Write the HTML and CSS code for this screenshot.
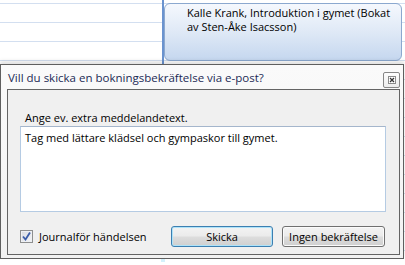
FILE: index.html
```html
<!DOCTYPE html>
<html lang="sv">
<head>
    <meta charset="UTF-8">
    <title>Bokningsbekräftelse</title>
    <link rel="stylesheet" href="styles.css">
</head>
<body>
    <div class="calendar">
        <div class="day-line"></div>
        <div class="booking">Kalle Krank, Introduktion i gymet (Bokat av Sten-Åke Isacsson)</div>
    </div>

    <div class="dialog">
        <div class="titlebar">
            <span class="caption">Vill du skicka en bokningsbekräftelse via e-post?</span>
            <span class="close-btn">
                <svg width="8" height="8" viewBox="0 0 8 8">
                    <rect x="0.5" y="0.5" width="7" height="7" fill="#fff" stroke="#8a8a8a"/>
                    <path d="M2 2 L6 6 M6 2 L2 6" stroke="#333" stroke-width="1.3"/>
                </svg>
            </span>
        </div>
        <div class="panel">
            <label class="msg-label" for="msg">Ange ev. extra meddelandetext.</label>
            <div class="msg-box" id="msg">Tag med lättare klädsel och gympaskor till gymet.</div>
            <div class="actions">
                <label class="check">
                    <span class="check-box">
                        <svg width="9" height="9" viewBox="0 0 9 9">
                            <path d="M1 4.5 L3.5 7.5 L8 0.5" fill="none" stroke="#3a5ca8" stroke-width="1.8"/>
                        </svg>
                    </span>
                    Journalför händelsen
                </label>
                <span class="btn btn-default">Skicka</span>
                <span class="btn">Ingen bekräftelse</span>
            </div>
        </div>
    </div>
    <div class="line-glow"></div>
</body>
</html>
```

FILE: styles.css
```css
body {
    margin: 0;
    width: 405px;
    height: 265px;
    overflow: hidden;
    font-family: 'Open Sans', sans-serif;
    font-size: 11px;
    color: #000;
    background-color: #fff;
    background-image: repeating-linear-gradient(to bottom, transparent 0, transparent 3px, #d3dff0 3px, #d3dff0 4px, transparent 4px, transparent 19px);
    position: relative;
}
.calendar {
    height: 60px;
    position: relative;
}
.day-line {
    position: absolute;
    left: 162px;
    top: 0;
    width: 2px;
    height: 66px;
    background: #6a93cf;
}
.line-glow {
    position: absolute;
    left: 161px;
    top: 259px;
    width: 4px;
    height: 3px;
    background: #d4f1fb;
}
.booking {
    position: absolute;
    left: 164px;
    top: 3px;
    width: 238px;
    height: 58px;
    box-sizing: border-box;
    padding: 2px 4px 0 22px;
    border: 1px solid #8ba8cf;
    border-radius: 6px;
    background: linear-gradient(to bottom, #f5f8fd, #dfe9f6 50%, #c5d7ef);
    line-height: 14px;
    color: #000;
}
.dialog {
    position: absolute;
    left: 0;
    top: 64px;
    width: 404px;
    height: 195px;
    box-sizing: border-box;
    border: 1px solid #5f5f5f;
    background: linear-gradient(to bottom, #fafafa, #f2f2f2);
    padding: 0 3px 3px 6px;
    box-shadow: 0 -3px 4px rgba(0, 0, 0, 0.12);
}
.titlebar {
    height: 24px;
    display: flex;
    align-items: center;
    justify-content: space-between;
}
.caption {
    color: #1c2a55;
    font-size: 11.5px;
    padding-left: 1px;
    margin-top: 1px;
}
.close-btn {
    width: 15px;
    height: 14px;
    border: 1px solid #868686;
    border-radius: 2px;
    background: linear-gradient(to bottom, #fdfdfd, #ececec);
    display: flex;
    align-items: center;
    justify-content: center;
    margin-top: 5px;
}
.close-btn svg {
    display: block;
}
.panel {
    height: 166px;
    box-sizing: border-box;
    border: 1px solid #646464;
    background: #f0f0f0;
    padding: 20px 12px 0 12px;
    display: flex;
    flex-direction: column;
}
.msg-label {
    display: block;
    padding-left: 5px;
    line-height: 15px;
    height: 16px;
}
.msg-box {
    height: 86px;
    box-sizing: border-box;
    border: 1px solid #b5cbe3;
    border-top-color: #a5b6cc;
    background: #fff;
    padding: 3px 4px;
    width: 366px;
}
.actions {
    display: flex;
    align-items: center;
    margin-top: 14px;
    height: 20px;
}
.check {
    display: flex;
    align-items: center;
    gap: 6px;
    width: 151px;
}
.check-box {
    width: 11px;
    height: 11px;
    border: 1px solid #8e8f8f;
    background: linear-gradient(135deg, #d6d9e0, #f5f6f8);
    box-shadow: inset 0 0 0 1px #eef0f4;
    display: flex;
    align-items: center;
    justify-content: center;
}
.btn {
    width: 103px;
    height: 21px;
    box-sizing: border-box;
    border: 1px solid #707070;
    border-radius: 3px;
    background: linear-gradient(to bottom, #f3f3f3, #ebebeb 48%, #dddddd 52%, #cfcfcf);
    box-shadow: inset 0 0 0 1px #fbfbfb;
    display: flex;
    align-items: center;
    justify-content: center;
}
.btn-default {
    width: 102px;
    margin-right: 9px;
    border-color: #3c7fb1;
    box-shadow: inset 0 0 0 1px #aee3f9;
}
```
